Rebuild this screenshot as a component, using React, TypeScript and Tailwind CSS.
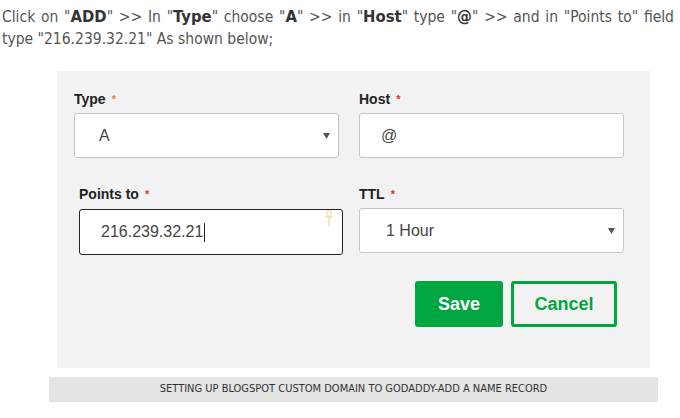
import React from "react";

const tahoma = { fontFamily: '"DejaVu Sans Condensed", "DejaVu Sans", sans-serif' };

function Label({ text, star = "text-[#e0302a]" }: { text: string; star?: string }) {
  return (
    <div className="h-[22px] flex items-start text-[14px] font-bold text-[#222] leading-[16px]">
      {text}
      <span className={`ml-[6px] text-[11px] ${star}`}>*</span>
    </div>
  );
}

function Arrow() {
  return (
    <svg width="7" height="6" viewBox="0 0 7 6" className="shrink-0">
      <path d="M0 0 H7 L3.5 6 Z" fill="#555" />
    </svg>
  );
}

function Ankh() {
  return (
    <svg width="8" height="17" viewBox="0 0 8 17" className="absolute right-[9px] top-0">
      <ellipse cx="4" cy="3.2" rx="2.3" ry="2.7" fill="none" stroke="#efe8b6" strokeWidth="1.5" />
      <path d="M0.5 7.2 H7.5 M4 6 V16.5" stroke="#efe8b6" strokeWidth="1.8" />
    </svg>
  );
}

function SelectBox({ value, pl }: { value: string; pl: string }) {
  return (
    <div
      className={`h-[45px] w-[265px] bg-white border border-[#c4c4c4] rounded-[3px] flex items-center justify-between pr-[8px] ${pl}`}
    >
      <span className="text-[16px] text-[#444]">{value}</span>
      <Arrow />
    </div>
  );
}

export default function App() {
  return (
    <div className="w-[680px] h-[418px] bg-white overflow-hidden font-['Liberation_Sans',Arial,sans-serif]">
      <div className="text-[15.5px] leading-[22px] text-[#555] pl-[2px] pr-[6px] pt-[6px]" style={tahoma}>
        <div className="text-justify [text-align-last:justify]">
          Click on "<b className="text-[#333] text-[16.5px]">ADD</b>" &gt;&gt; In "<b className="text-[#333] text-[16.5px]">Type</b>" choose "<b className="text-[#333] text-[16.5px]">A</b>" &gt;&gt; in "<b className="text-[#333] text-[16.5px]">Host</b>" type "<b className="text-[#333] text-[16.5px]">@</b>" &gt;&gt; and in "Points to" field
        </div>
        <div>type "216.239.32.21" As shown below;</div>
      </div>

      <div className="ml-[57px] mt-[21px] w-[593px] h-[297px] bg-[#f2f2f2] pl-[17px] pt-[20px]">
        <div className="flex gap-[20px]">
          <div>
            <Label text="Type" star="text-[#e8861c]" />
            <SelectBox value="A" pl="pl-[24px]" />
          </div>
          <div>
            <Label text="Host" />
            <div className="h-[45px] w-[265px] bg-white border border-[#c4c4c4] rounded-[3px] flex items-center pl-[21px]">
              <span className="text-[16px] text-[#444]">@</span>
            </div>
          </div>
        </div>

        <div className="flex mt-[28px]">
          <div className="ml-[5px] w-[264px] mr-[16px]">
            <Label text="Points to" />
            <div className="relative mt-[1px] h-[46px] bg-white border border-[#222] rounded-[3px] flex items-center pl-[21px]">
              <span className="text-[16px] text-[#444]">216.239.32.21</span>
              <span className="w-px h-[19px] bg-[#222] ml-px" />
              <Ankh />
            </div>
          </div>
          <div>
            <Label text="TTL" />
            <SelectBox value="1 Hour" pl="pl-[26px]" />
          </div>
        </div>

        <div className="flex justify-end gap-[8px] mt-[26px] pr-[33px]">
          <button className="w-[88px] h-[46px] bg-[#00a63f] rounded-[3px] text-white text-[18px] font-bold">
            Save
          </button>
          <button className="w-[106px] h-[46px] border-[3px] border-[#00a63f] rounded-[3px] text-[#00a63f] text-[18px] font-bold">
            Cancel
          </button>
        </div>
      </div>

      <div
        className="ml-[49px] mt-[9px] w-[609px] h-[25px] bg-[#e4e4e4] flex items-center justify-center text-[11px] text-[#333] uppercase"
        style={tahoma}
      >
        Setting up blogspot custom domain to godaddy-add a name record
      </div>
    </div>
  );
}
